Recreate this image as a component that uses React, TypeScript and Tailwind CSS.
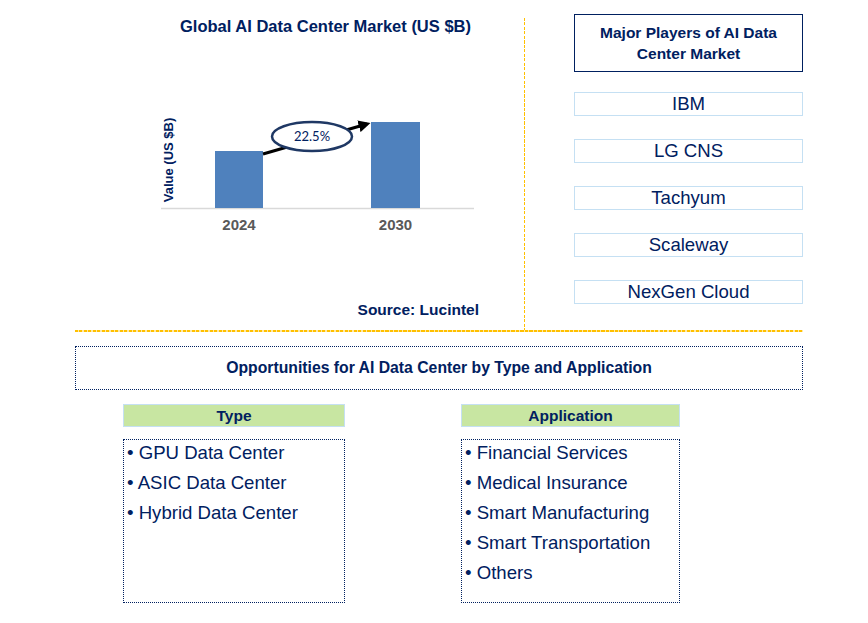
import React from 'react';

const players = ['IBM', 'LG CNS', 'Tachyum', 'Scaleway', 'NexGen Cloud'];
const types = ['GPU Data Center', 'ASIC Data Center', 'Hybrid Data Center'];
const applications = [
  'Financial Services',
  'Medical Insurance',
  'Smart Manufacturing',
  'Smart Transportation',
  'Others',
];

const MarketChart: React.FC = () => (
  <svg width={318} height={210} viewBox="0 0 318 210" className="block">
    <defs>
      <marker id="arrowHead" viewBox="0 0 10 10" refX="7" refY="5" markerWidth="4" markerHeight="4" orient="auto">
        <path d="M0,0 L10,5 L0,10 z" fill="#000" />
      </marker>
    </defs>
    <line x1={0} y1={174.5} x2={313} y2={174.5} stroke="#d9d9d9" strokeWidth={1.5} />
    <rect x={54} y={117} width={48} height={57} fill="#4f81bd" />
    <rect x={210} y={88} width={49} height={86} fill="#4f81bd" />
    <line x1={102} y1={120} x2={206} y2={90} stroke="#000" strokeWidth={3} markerEnd="url(#arrowHead)" />
    <ellipse cx={151} cy={102.5} rx={40} ry={14.5} fill="#fff" stroke="#1f3864" strokeWidth={2.5} />
    <text x={151} y={107} textAnchor="middle" fontSize={13} fill="#002060" fontFamily="Lato, 'Open Sans', sans-serif">
      22.5%
    </text>
    <text
      x={0}
      y={0}
      transform="translate(7.5 126) rotate(-90)"
      textAnchor="middle"
      dominantBaseline="central"
      fontSize={13}
      fontWeight={700}
      fill="#002060"
      fontFamily="'Liberation Sans', Arial, sans-serif"
    >
      Value (US $B)
    </text>
    <text x={78} y={196} textAnchor="middle" fontSize={15} fontWeight={700} fill="#595959" fontFamily="'Liberation Sans', Arial, sans-serif">
      2024
    </text>
    <text x={234.5} y={196} textAnchor="middle" fontSize={15} fontWeight={700} fill="#595959" fontFamily="'Liberation Sans', Arial, sans-serif">
      2030
    </text>
  </svg>
);

const SegmentColumn: React.FC<{ title: string; items: string[]; width: string }> = ({ title, items, width }) => (
  <div className={`${width} flex flex-col`}>
    <div className="h-[23px] bg-[#c8e6a2] border border-[#c5e0f3] flex items-center justify-center text-[15.5px] font-bold text-[#002060]">
      {title}
    </div>
    <div className="mt-[12px] h-[164px] border border-dotted border-[#002060] pl-[3px]">
      <ul className="-mt-[2px] text-[18.6px] leading-[30px] text-[#002060]">
        {items.map((item) => (
          <li key={item}>• {item}</li>
        ))}
      </ul>
    </div>
  </div>
);

export default function App() {
  return (
    <div className="w-[868px] h-[623px] bg-white overflow-hidden font-['Liberation_Sans',Arial,sans-serif]">
      <div className="mt-[14px] ml-[75px] w-[728px] flex flex-col">
        <div className="flex items-start">
          <div className="mt-[4px] w-[449px] h-[312px] pl-[86px] pr-[45px] flex flex-col">
            <h1 className="pl-[11px] text-center text-[16.5px] leading-[16px] font-bold text-[#002060] whitespace-nowrap">
              Global AI Data Center Market (US $B)
            </h1>
            <MarketChart />
            <div className="mt-[57px] text-right text-[15.5px] leading-[18px] font-bold text-[#002060]">Source: Lucintel</div>
          </div>
          {/* dashed divider */}
          <div className="mt-[4px] w-px h-[312px] bg-[repeating-linear-gradient(180deg,#ffc000_0_3px,transparent_3px_4.5px)]" />
          <div className="pl-[49px] w-[278px] flex flex-col">
            <div className="h-[58px] border border-[#002060] flex items-center justify-center text-center text-[15.5px] leading-[21px] font-bold text-[#002060]">
              Major Players of AI Data
              <br />
              Center Market
            </div>
            <div className="mt-[20px] flex flex-col gap-[23px]">
              {players.map((p) => (
                <div key={p} className="h-[24px] border border-[#c5e0f3] flex items-center justify-center text-[18.6px] text-[#002060]">
                  {p}
                </div>
              ))}
            </div>
          </div>
        </div>
        <div className="h-[2px] bg-[repeating-linear-gradient(90deg,#ffc000_0_3px,#ffe9a8_3px_4.5px)]" />
      </div>

      <div className="mt-[14px] ml-[75px] w-[728px] h-[44px] border border-dotted border-[#002060] flex items-center justify-center text-[15.75px] font-bold text-[#002060]">
        Opportunities for AI Data Center by Type and Application
      </div>

      <div className="mt-[14px] pl-[123px] flex gap-[116px]">
        <SegmentColumn title="Type" items={types} width="w-[222px]" />
        <SegmentColumn title="Application" items={applications} width="w-[219px]" />
      </div>
    </div>
  );
}
